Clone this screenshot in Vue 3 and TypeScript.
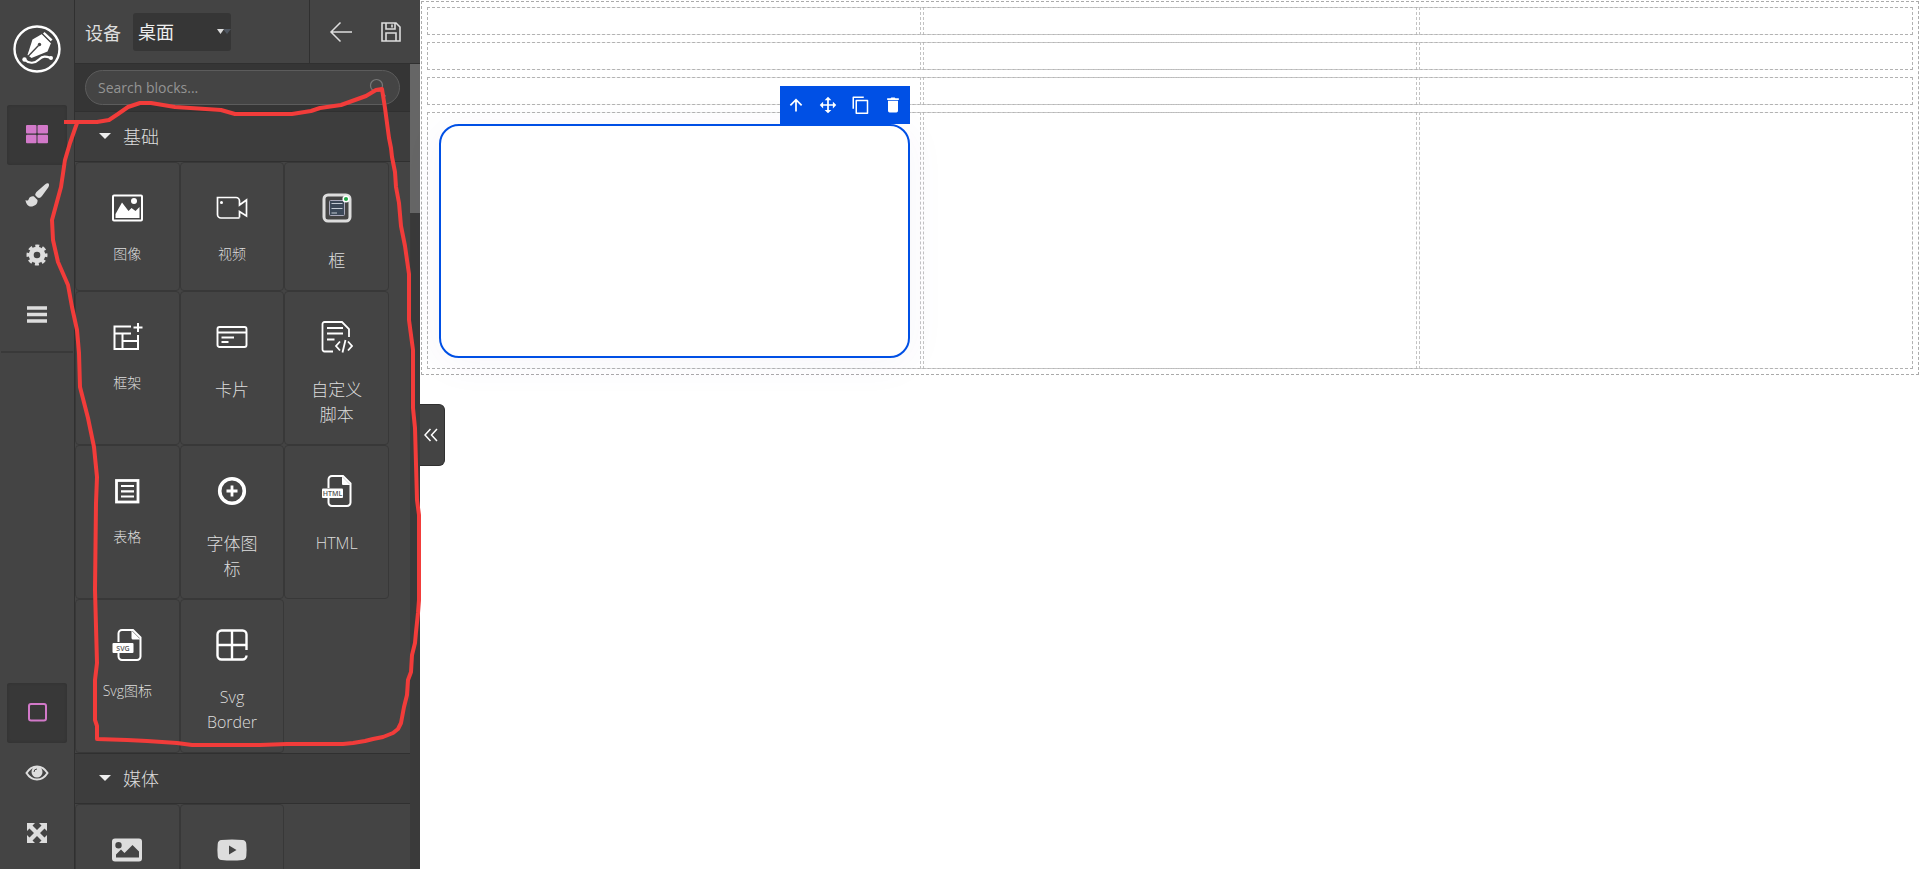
<script setup lang="ts">
import { ref } from 'vue'

interface Block {
  label: string
  icon: string
  size?: 'small' | 'latin'
}

const device = ref('desktop')
const search = ref('')

const blocks: Block[] = [
  {
    label: '图像',
    size: 'small',
    icon: '<rect x="2" y="3.5" width="29" height="25" rx="1" fill="none" stroke="#fff" stroke-width="2"/><path d="M4.500 26v-4l6.500-11.500 6.500 8.500 3-3 4 3 4-4v11z" fill="#fff"/><circle cx="23" cy="9" r="3" fill="#fff"/>',
  },
  {
    label: '视频',
    size: 'small',
    icon: '<path d="M23.500 26H5a3.500 3.500 0 0 1-3.500-3.500V5.500H20a3.500 3.500 0 0 1 3.500 3.500v4l7-5v16l-7-4.500v6" fill="none" stroke="#fff" stroke-width="1.700"/><circle cx="5.500" cy="10.500" r="1.500" fill="#fff"/>',
  },
  {
    label: '框',
    icon: '<rect x="3" y="3" width="26" height="26" rx="4" fill="none" stroke="#ddd" stroke-width="3"/><rect x="8.500" y="8.500" width="15" height="15" rx="1" fill="#3c4858" stroke="#aab" stroke-width="1"/><path d="M10.500 11.500h11M10.500 16.500h11M10.500 21h5.500" stroke="#c4cbd4" stroke-width="1.200"/><circle cx="25" cy="7" r="2.800" fill="#21a645" stroke="#fff" stroke-width="1.500"/>',
  },
  {
    label: '框架',
    size: 'small',
    icon: '<path d="M20 5.500H3.500V28H27V14M3.500 12.500H20M11.500 12.500V28M11.500 20H27M27 2v9M22.500 6.500h9" fill="none" stroke="#fff" stroke-width="2"/>',
  },
  {
    label: '卡片',
    icon: '<rect x="1.500" y="6" width="29" height="20" rx="2" fill="none" stroke="#fff" stroke-width="1.900"/><path d="M1.500 11.500h29M5.500 16.500h12.500M5.500 21h7" stroke="#fff" stroke-width="2"/>',
  },
  {
    label: '自定义脚本',
    icon: '<path d="M12 30.500H3.500a2 2 0 0 1-2-2V3a2 2 0 0 1 2-2H21l7 7v8M6 7h16M6 12.500h16M6 18.500h7.500" fill="none" stroke="#fff" stroke-width="1.800"/><path d="M19 20.500l-4 4.500 4 4.500M27 20.500l4 4.500-4 4.500M24.500 19l-3 12.500" fill="none" stroke="#fff" stroke-width="1.800"/>',
  },
  {
    label: '表格',
    size: 'small',
    icon: '<rect x="5.500" y="5.500" width="21.500" height="21.500" fill="none" stroke="#fff" stroke-width="2.800"/><path d="M10 11h13M10 16.300h13M10 21.500h13" stroke="#fff" stroke-width="2.200"/>',
  },
  {
    label: '字体图标',
    icon: '<circle cx="16" cy="16" r="12.300" fill="none" stroke="#fff" stroke-width="3.600"/><path d="M16 10.500v11M10.500 16h11" stroke="#fff" stroke-width="2.800"/>',
  },
  {
    label: 'HTML',
    size: 'latin',
    icon: '<path d="M7.500 13V4.500a3.500 3.500 0 0 1 3.500-3.500h11l7.500 7.500V27.500a3.500 3.500 0 0 1-3.500 3.500H11a3.500 3.500 0 0 1-3.500-3.500V23" fill="none" stroke="#fff" stroke-width="2"/><path d="M21 1.500l8.500 8.500H22a1 1 0 0 1-1-1z" fill="#fff"/><rect x="1" y="13.500" width="21" height="9.500" rx="1" fill="#fff"/><text x="11.500" y="20.800" font-size="7" font-weight="600" text-anchor="middle" fill="#555">HTML</text>',
  },
  {
    label: 'Svg图标',
    size: 'small',
    icon: '<path d="M7.500 13V4.500a3.500 3.500 0 0 1 3.500-3.500h11l7.500 7.500V27.500a3.500 3.500 0 0 1-3.500 3.500H11a3.500 3.500 0 0 1-3.500-3.500V24" fill="none" stroke="#fff" stroke-width="2"/><path d="M20.500 1.500l9 9H22a1.500 1.500 0 0 1-1.500-1.500z" fill="#fff"/><rect x="1.500" y="14" width="21" height="10" rx="1" fill="#fff"/><text x="12" y="21.500" font-size="7" font-weight="600" text-anchor="middle" fill="#555">SVG</text>',
  },
  {
    label: 'Svg Border',
    size: 'latin',
    icon: '<path d="M30.500 21V5.500a4 4 0 0 0-4-4h-21a4 4 0 0 0-4 4v21a4 4 0 0 0 4 4h21a4 4 0 0 0 4-4M16 1.500v29M1.500 16h29" fill="none" stroke="#fff" stroke-width="2.400"/>',
  },
]

const media: Block[] = [
  {
    label: '图片',
    icon: '<path fill-rule="evenodd" d="M4 4.500h24a3 3 0 0 1 3 3v17a3 3 0 0 1-3 3H4a3 3 0 0 1-3-3v-17a3 3 0 0 1 3-3zM7.500 8a3.200 3.200 0 1 0 0 6.400 3.200 3.200 0 0 0 0-6.400zM5 23.500h23v-6L21.500 11l-8 8-3.500-3.500-5 5z" fill="#ddd"/>',
  },
  {
    label: '视频',
    icon: '<path fill-rule="evenodd" d="M5.500 6Q16 5 26.500 6 30 6.300 30.300 10q.6 6 0 12-.3 3.700-3.800 4Q16 27 5.500 26 2 25.700 1.700 22q-.6-6 0-12Q2 6.300 5.500 6zM13 11.500v9l7.500-4.500z" fill="#ddd"/>',
  },
]

const rows = ['short', 'short', 'short', 'tall']
</script>

<template>
  <div class="editor">
    <nav class="rail" aria-label="主导航">
      <svg class="logo" viewBox="0 0 48 48" aria-hidden="true">
        <circle cx="24" cy="24" r="22.500" fill="none" stroke="#fff" stroke-width="2.400" />
        <path d="M14.500 30l5-15.500L29 9l9 9-3.500 8.500-16 6.500z" fill="#fff" />
        <path d="M30.500 8l8 7.500" stroke="#fff" stroke-width="3" />
        <path d="M28 7.500l10 10" stroke="#444" stroke-width="1.200" />
        <path d="M14.500 32l11-11.500" stroke="#444" stroke-width="1.400" />
        <circle cx="26.500" cy="19.500" r="1.700" fill="#444" />
        <path d="M12 35c4 4 10 3.500 14-.5s7-3 12-1.500" fill="none" stroke="#fff" stroke-width="2.200" />
        <circle cx="11.500" cy="34.500" r="2.200" fill="#fff" /><circle cx="38" cy="33" r="2" fill="#fff" />
      </svg>
      <div class="tools">
        <button class="tool active" aria-label="组件">
          <svg viewBox="0 0 24 24"><g fill="#d279c9"><rect x="1" y="2" width="10.500" height="8.500" rx="1" /><rect x="12.500" y="2" width="10.500" height="8.500" rx="1" /><rect x="1" y="11.700" width="10.500" height="8.500" rx="1" /><rect x="12.500" y="11.700" width="10.500" height="8.500" rx="1" /></g></svg>
        </button>
        <button class="tool" aria-label="样式">
          <svg viewBox="0 0 24 24"><path d="M23.500.5c1 1 .5 2.500-.3 4L17 13c-1.500 2-3 2.500-4.500 1.500l-2-2c-.7-1 0-2.500 1.500-4l8-7C21.500.3 22.700-.2 23.500.5zM9 13.500l3.500 3.500c.5 4-3 6.500-6.500 6.500C3 23.500 1 21 .5 17c2 1 2.700.5 3.200-.8.8-2.200 3-3.200 5.300-2.700z" fill="#ddd" /></svg>
        </button>
        <button class="tool" aria-label="设置">
          <svg viewBox="0 0 24 24"><circle cx="12" cy="12" r="5.800" fill="none" stroke="#ddd" stroke-width="5" /><circle cx="12" cy="12" r="8.700" fill="none" stroke="#ddd" stroke-width="3.600" stroke-dasharray="3.800 3.034" stroke-dashoffset="1.900" /></svg>
        </button>
        <button class="tool" aria-label="图层">
          <svg viewBox="0 0 24 24"><path d="M2 5h20M2 11.500h20M2 18h20" stroke="#ddd" stroke-width="3.600" /></svg>
        </button>
      </div>
      <div class="tools bottom">
        <button class="tool active" aria-label="显示边框">
          <svg viewBox="0 0 24 24"><rect x="4" y="3" width="17" height="16.500" rx="2" fill="none" stroke="#d279c9" stroke-width="2" /></svg>
        </button>
        <button class="tool" aria-label="预览">
          <svg viewBox="0 0 24 24"><path d="M1.500 12C4 8 8 5.500 12 5.500S20 8 22.500 12C20 16 16 18.500 12 18.500S4 16 1.500 12z" fill="none" stroke="#ddd" stroke-width="2" /><circle cx="12" cy="11" r="5.500" fill="#ddd" /><path d="M9 11a3 3 0 0 1 3-3" fill="none" stroke="#444" /></svg>
        </button>
        <button class="tool" aria-label="全屏">
          <svg viewBox="0 0 24 24"><path d="M2 2h8L7.500 4.500 12 9l4.500-4.500L14 2h8v8l-2.500-2.500L15 12l4.500 4.500L22 14v8h-8l2.500-2.500L12 15l-4.500 4.500L10 22H2v-8l2.500 2.500L9 12 4.500 7.500 2 10z" fill="#ddd" /></svg>
        </button>
      </div>
    </nav>

    <aside class="panel">
      <header class="head">
        <label for="device">设备</label>
        <div class="select-box">
          <select id="device" v-model="device">
            <option value="desktop">桌面</option>
            <option value="tablet">平板</option>
            <option value="mobile">手机</option>
          </select>
          <svg class="arrows" viewBox="0 0 14 6" aria-hidden="true"><path d="M6 0h8l-4 5z" fill="#4f5660" /><path d="M0 0h7L3.500 5z" fill="#ddd" /></svg>
        </div>
        <div class="head-actions">
          <button aria-label="返回">
            <svg viewBox="0 0 24 24"><path d="M23 12H1.500M11.500 2.500L2 12l9.500 9.500" fill="none" stroke="#ddd" stroke-width="1.500" /></svg>
          </button>
          <button aria-label="保存">
            <svg viewBox="0 0 24 24"><path d="M3 3h14l4 4v14H3zM7 3v6h9V3M7 21v-8h10v8M13 4.500v3" fill="none" stroke="#ddd" stroke-width="1.600" /></svg>
          </button>
        </div>
      </header>

      <div class="panel-body">
        <div class="list">
          <div class="search">
            <div class="search-box">
              <input v-model="search" type="text" placeholder="Search blocks..." aria-label="Search blocks" />
              <svg viewBox="0 0 18 20" aria-hidden="true"><circle cx="7.500" cy="7.500" r="6" fill="none" stroke="#777" stroke-width="1.200" /><path d="M11.500 12.500l5 6" stroke="#777" stroke-width="1.600" /></svg>
            </div>
          </div>

          <section>
            <h2><button class="category"><i class="caret" />基础</button></h2>
            <div class="blocks">
              <button v-for="b in blocks" :key="b.label" class="block">
                <svg viewBox="0 0 32 32" v-html="b.icon" />
                <span :class="b.size">{{ b.label }}</span>
              </button>
            </div>
          </section>

          <section>
            <h2><button class="category"><i class="caret" />媒体</button></h2>
            <div class="blocks">
              <button v-for="m in media" :key="m.label" class="block" :aria-label="m.label">
                <svg viewBox="0 0 32 32" v-html="m.icon" />
              </button>
            </div>
          </section>
        </div>
        <div class="scrollbar"><div class="thumb" /></div>
      </div>
    </aside>

    <main class="canvas">
      <div class="frame">
        <div v-for="(kind, r) in rows" :key="r" class="row" :class="kind">
          <div v-for="c in 3" :key="c" class="cell">
            <div v-if="kind === 'tall' && c === 1" class="card">
              <div class="toolbar">
                <button aria-label="选择上级">
                  <svg viewBox="0 0 24 24"><path d="M12 20.500V5M4.500 12.500L12 5l7.500 7.500" fill="none" stroke="#fff" stroke-width="2.300" /></svg>
                </button>
                <button aria-label="移动">
                  <svg viewBox="0 0 24 24"><path d="M12 4v16M4 12h16" stroke="#fff" stroke-width="2.300" /><path d="M12 1l4.500 4.500h-9zM12 23l4.500-4.500h-9zM1 12l4.500-4.500v9zM23 12l-4.500-4.500v9z" fill="#fff" /></svg>
                </button>
                <button aria-label="复制">
                  <svg viewBox="0 0 24 24"><path d="M3 17V1.500h14M7 6h15v17H7z" fill="none" stroke="#fff" stroke-width="2" stroke-linejoin="round" /></svg>
                </button>
                <button aria-label="删除">
                  <svg viewBox="0 0 24 24"><path d="M6 7h12v12a2 2 0 0 1-2 2H8a2 2 0 0 1-2-2zM5 4h4l1-1h4l1 1h4v2H5z" fill="#fff" /></svg>
                </button>
              </div>
            </div>
          </div>
        </div>
      </div>
      <button class="collapse" aria-label="收起面板">
        <svg viewBox="0 0 14 14"><path d="M6.500 1L1 7l5.500 6M13 1L7.500 7l5.500 6" fill="none" stroke="#fff" stroke-width="1.500" /></svg>
      </button>
    </main>

    <svg class="marker" viewBox="0 0 430 869" aria-hidden="true">
      <path d="M64 122H97L109 120 118 114 128 107 140 103H151L175 107 221 110 235 114H292L311 111 320 108 341 105 366 96 376 90 382 89 385 108 389 138 391 148 392 157 395 172 396 187 399 203 401 226 405 246 409 274 409 320 413 350 413 408 415 428 417 500 419 515V600L418 613 416 632 415 643 412 655 411 672 408 680 407 695 404 707 401 723 398 729 393 733 383 737 373 739 365 741 353 743 343 744H287L260 745H192L177 743 147 741 127 740 97 739 97 726 95 720V680L97 663 95 590 96 503 97 477 94 447 88 418 80 387 79 353 77 330 72 307 68 285 58 262 53 240 52 220 61 187 65 160 70 143 77 123" />
    </svg>
  </div>
</template>

<style>
body {
  margin: 0;
}
</style>

<style scoped>
.editor {
  position: relative;
  display: flex;
  height: 100vh;
  overflow: hidden;
  background: #fff;
  color: #ddd;
  font-family: "Open Sans", "Noto Sans CJK SC", sans-serif;
}
.editor *,
.editor {
  box-sizing: border-box;
}
button {
  margin: 0;
  padding: 0;
  border: 0;
  background: none;
  color: inherit;
  font: inherit;
  cursor: pointer;
}
svg {
  display: block;
}
.rail {
  display: flex;
  flex: none;
  flex-direction: column;
  align-items: center;
  width: 75px;
  padding: 25px 0 6px;
  border-right: 1px solid #303030;
  background: #444;
}
.logo {
  width: 48px;
  height: 48px;
  margin-bottom: 32px;
}
.tools {
  display: flex;
  flex-direction: column;
  align-items: center;
  width: 72px;
  padding-bottom: 6px;
  border-bottom: 2px solid #393939;
}
.tools.bottom {
  margin-top: auto;
  padding: 0;
  border: 0;
}
.tool {
  display: grid;
  place-items: center;
  width: 60px;
  height: 60px;
  border-radius: 3px;
}
.tool svg {
  width: 24px;
  height: 24px;
}
.tool.active {
  background: #383838;
  box-shadow: inset 0 0 3px #303030;
}
.panel {
  display: flex;
  flex: none;
  flex-direction: column;
  width: 345px;
  background: #444;
}
.head {
  display: flex;
  flex: none;
  align-items: center;
  height: 64px;
  padding-left: 10px;
  border-bottom: 1px solid #303030;
  font-size: 18px;
}
.select-box {
  position: relative;
  width: 98px;
  height: 38px;
  margin-left: 12px;
}
select {
  width: 100%;
  height: 100%;
  padding: 0 5px;
  border: 0;
  border-radius: 3px;
  appearance: none;
  background: #363636;
  color: #eee;
  font: inherit;
}
.arrows {
  position: absolute;
  top: 16px;
  right: 0;
  width: 14px;
  height: 6px;
  pointer-events: none;
}
.head-actions {
  display: flex;
  align-items: center;
  height: 100%;
  gap: 26px;
  margin-left: auto;
  padding: 0 17px 0 19px;
  border-left: 1px solid #303030;
}
.head-actions svg {
  width: 24px;
  height: 24px;
}
.panel-body {
  display: flex;
  flex: 1;
  min-height: 0;
}
.list {
  flex: 1;
  min-width: 0;
  overflow: hidden;
}
.scrollbar {
  width: 10px;
  background: #3a3a3a;
}
.thumb {
  height: 18.5%;
  background: #666;
}
.search {
  padding: 6px 10px;
  background: #353535;
}
.search-box {
  display: flex;
  align-items: center;
  height: 35px;
  padding: 0 12px;
  border: 1px solid #5c5c5c;
  border-radius: 18px;
  background: #444;
}
input {
  flex: 1;
  min-width: 0;
  padding: 0;
  border: 0;
  outline: 0;
  background: none;
  color: #ddd;
  font: 14px "Open Sans", "Noto Sans CJK SC", sans-serif;
}
input::placeholder {
  color: #949494;
}
.search-box svg {
  width: 18px;
  height: 20px;
}
h2 {
  margin: 0;
}
.category {
  display: flex;
  align-items: center;
  width: 100%;
  height: 51px;
  padding: 0 0 2px 24px;
  border-top: 1px solid #303030;
  border-bottom: 1px solid #303030;
  background: #3d3d3d;
  color: #ddd;
  font-size: 18px;
  font-weight: 300;
}
.caret {
  margin-right: 12px;
  border: 6px solid transparent;
  border-top-color: #eee;
  border-bottom: 0;
}
.blocks {
  display: grid;
  grid-template-columns: repeat(3, 1fr);
  padding-right: 21px;
}
.block {
  display: flex;
  flex-direction: column;
  align-items: center;
  min-height: 129px;
  padding: 29px 23px 17px;
  border: 1px solid #383838;
  border-radius: 4px;
}
.block svg {
  flex: none;
  width: 32px;
  height: 32px;
}
.block span {
  margin-top: 24px;
  font-size: 17px;
  font-weight: 300;
  line-height: 25px;
}
.block .latin {
  font-size: 16px;
}
.block .small {
  margin-top: 17px;
  font-size: 14px;
  white-space: nowrap;
}
.canvas {
  position: relative;
  flex: 1;
  min-width: 0;
  background: #fff;
}
.frame {
  display: flex;
  flex-direction: column;
  gap: 5px;
  padding: 6px;
}
.frame,
.row,
.cell {
  outline: 1px dashed rgba(170, 170, 170, 0.7);
  outline-offset: -2px;
}
.frame {
  outline-color: #aaa;
}
.row {
  display: grid;
  grid-template-columns: repeat(3, 1fr);
}
.cell {
  min-height: 30px;
}
.tall .cell {
  padding: 13px 12px 12px 13px;
}
.card {
  position: relative;
  height: 234px;
  border: 2px solid #0050e5;
  border-radius: 20px;
  background: #fff;
  box-shadow: 0 5px 40px rgba(80, 60, 150, 0.05);
}
.toolbar {
  position: absolute;
  right: -2px;
  bottom: calc(100% + 2px);
  display: flex;
  height: 38px;
  background: #0050e5;
}
.toolbar button {
  display: grid;
  place-items: center;
  width: 32px;
}
.toolbar button:last-child {
  width: 34px;
}
.toolbar svg {
  width: 18px;
  height: 18px;
}
.toolbar button:last-child svg {
  width: 20px;
  height: 20px;
}
.collapse {
  position: absolute;
  top: 404px;
  left: 0;
  display: grid;
  place-items: center;
  width: 25px;
  height: 62px;
  padding-right: 3px;
  border: 1px solid #303030;
  border-left: 0;
  border-radius: 0 6px 6px 0;
  background: #444;
}
.collapse svg {
  width: 14px;
  height: 14px;
}
.marker {
  position: absolute;
  top: 0;
  left: 0;
  width: 430px;
  height: 869px;
  pointer-events: none;
}
.marker path {
  fill: none;
  stroke: #f23c3a;
  stroke-width: 4;
  stroke-linejoin: round;
}
</style>
